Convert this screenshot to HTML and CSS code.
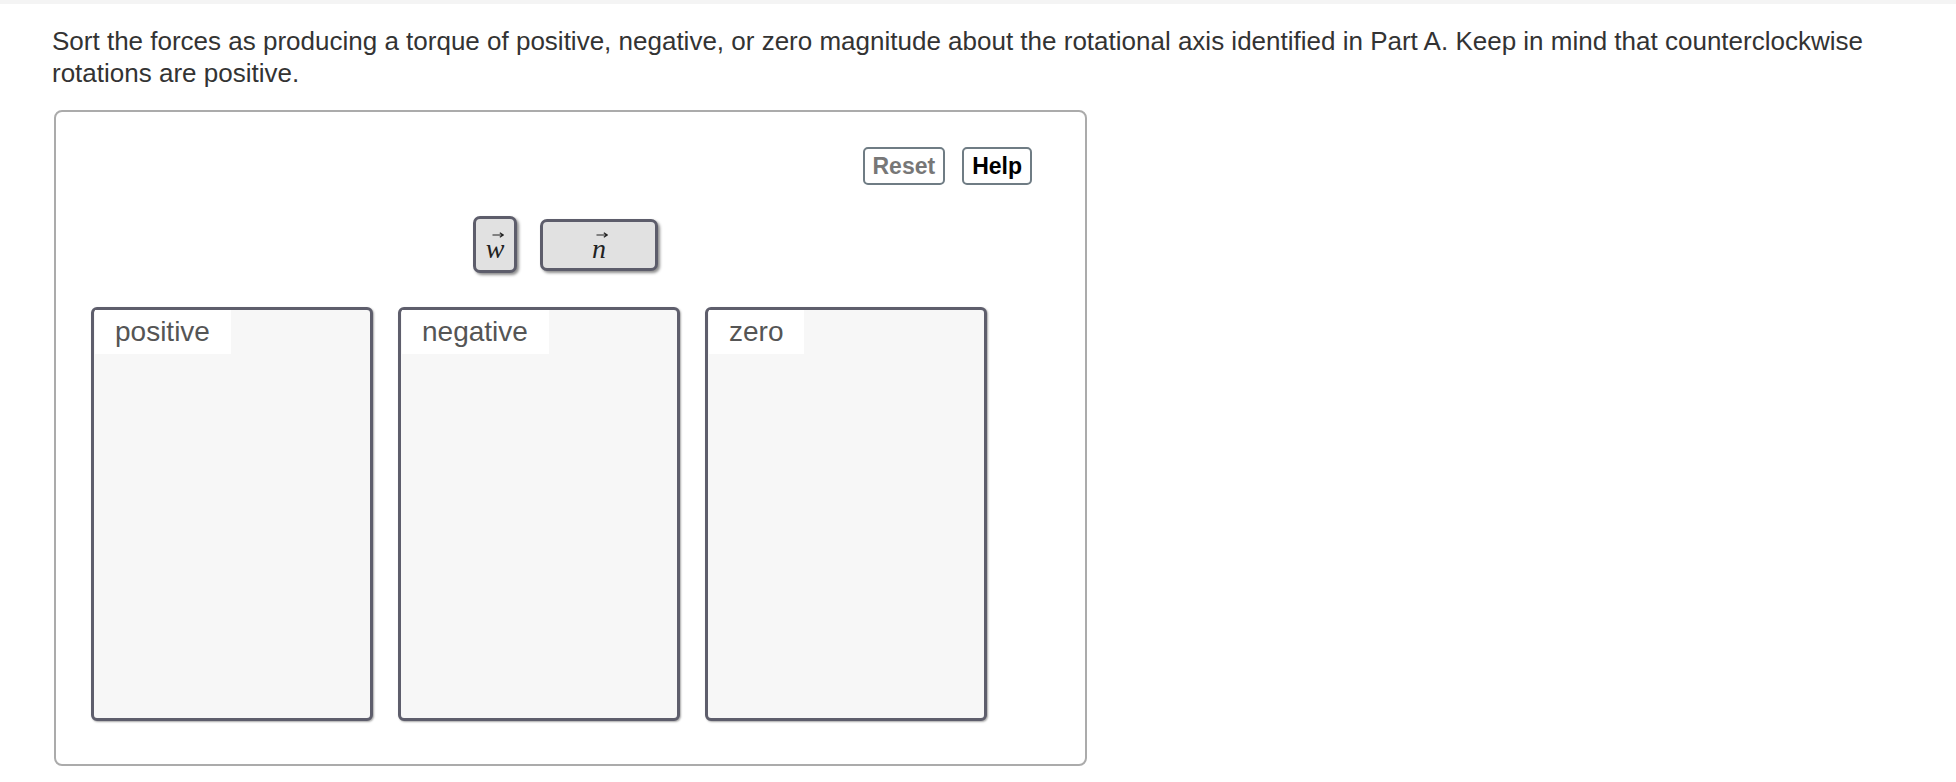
FILE: index.html
```html
<!DOCTYPE html>
<html lang="en">
<head>
    <meta charset="UTF-8">
    <title>Torque sorting</title>
    <link rel="stylesheet" href="styles.css">
</head>
<body>
    <div class="topbar"></div>

    <p class="prompt">Sort the forces as producing a torque of positive, negative, or zero magnitude about the rotational axis identified in Part A. Keep in mind that counterclockwise rotations are positive.</p>

    <div class="sorter">
        <!-- tools -->
        <div class="tools">
            <button class="tool-btn reset">Reset</button>
            <button class="tool-btn help">Help</button>
        </div>

        <!-- draggable items -->
        <div class="items">
            <div class="item item-w">
                <span class="vec">
                    <svg class="arrow" width="12" height="6" viewBox="0 0 12 6"><path d="M0.5 3H10.8M7.8 0.7L11.3 3L7.8 5.3" fill="none" stroke="#222" stroke-width="1.2"/></svg>
                    <i>w</i>
                </span>
            </div>
            <div class="item item-n">
                <span class="vec">
                    <svg class="arrow" width="12" height="6" viewBox="0 0 12 6"><path d="M0.5 3H10.8M7.8 0.7L11.3 3L7.8 5.3" fill="none" stroke="#222" stroke-width="1.2"/></svg>
                    <i>n</i>
                </span>
            </div>
        </div>

        <!-- bins -->
        <div class="bins">
            <div class="bin"><div class="bin-label">positive</div></div>
            <div class="bin"><div class="bin-label">negative</div></div>
            <div class="bin"><div class="bin-label">zero</div></div>
        </div>
    </div>
</body>
</html>
```

FILE: styles.css
```css
body {
    margin: 0;
    background: #fff;
    font-family: "Liberation Sans", Arial, sans-serif;
    color: #333;
}

.topbar {
    height: 4px;
    background: #f4f4f4;
}

/* question text */
.prompt {
    margin: 21px 0 0;
    padding: 0 52px;
    font-size: 26px;
    line-height: 32px;
}

/* sorting box */
.sorter {
    margin: 21px 0 0 54px;
    width: 1033px;
    border: 2px solid #ababab;
    border-radius: 8px;
    padding: 35px 53px 43px 35px;
    box-sizing: border-box;
}

.tools {
    display: flex;
    justify-content: flex-end;
    gap: 17px;
}

.tool-btn {
    height: 38px;
    padding: 0 8px;
    border: 2px solid #6f7c84;
    border-radius: 5px;
    background: #fff;
    font-family: "Liberation Sans", Arial, sans-serif;
    font-weight: bold;
    font-size: 23px;
    line-height: 34px;
}
.reset { color: #777; }
.help { color: #000; }

.items {
    display: flex;
    justify-content: center;
    align-items: center;
    gap: 23px;
    margin-top: 31px;
    padding-left: 8px;
    height: 57px;
}

.item {
    display: flex;
    justify-content: center;
    align-items: center;
    background: #e1e1e1;
    border: 3px solid #5d5d6b;
    border-radius: 7px;
    box-sizing: border-box;
    box-shadow: 2px 2px 3px rgba(0, 0, 0, 0.45);
}
.item-w { width: 44px; height: 57px; }
.item-n { width: 118px; height: 52px; }

.vec {
    display: flex;
    flex-direction: column;
    align-items: center;
    font-family: "Liberation Serif", "Times New Roman", serif;
    font-size: 28px;
    line-height: 17px;
    color: #222;
}
.arrow { display: block; margin: 0 0 2px 5px; }

/* bins */
.bins {
    display: flex;
    gap: 25px;
    margin-top: 34px;
}

.bin {
    width: 282px;
    height: 414px;
    box-sizing: border-box;
    border: 3px solid #5e5e6c;
    border-radius: 6px;
    background: #f7f7f7;
    box-shadow: 1px 1px 2px rgba(0, 0, 0, 0.35);
}

.bin-label {
    display: inline-block;
    margin-left: 1px;
    padding: 0 21px 0 20px;
    height: 44px;
    line-height: 44px;
    background: #fff;
    font-size: 28px;
    color: #555;
}
```
